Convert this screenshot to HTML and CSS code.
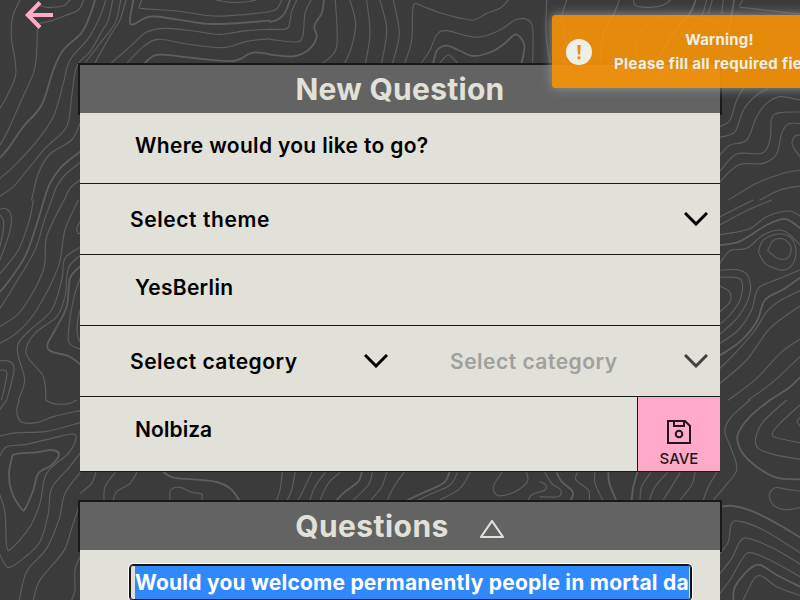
FILE: index.html
```html
<!DOCTYPE html>
<html lang="en">
<head>
<meta charset="utf-8">
<title>New Question</title>
<link rel="stylesheet" href="styles.css">
</head>
<body>
<svg class="contours" id="contours" viewBox="0 0 2400 1800" aria-hidden="true"></svg>
<a class="back"><svg width="28" height="28" viewBox="0 0 28 28"><path d="M15 1.500 2.800 14 15 26.500M3 14h25"/></svg></a>
<main class="page">
  <section class="board">
    <h1 class="board-head"><span class="t-new">New Question</span></h1>
    <div class="board-body">
      <div class="row field"><span class="t-where">Where would you like to go?</span></div>
      <div class="row"><div class="select"><span class="t-theme">Select theme</span><svg class="chevron" viewBox="0 0 24 14"><path d="M1 1l11 11L23 1"/></svg></div></div>
      <div class="row field"><span class="t-yes">YesBerlin</span></div>
      <div class="row">
        <div class="select"><span class="t-cat">Select category</span><svg class="chevron" viewBox="0 0 24 14"><path d="M1 1l11 11L23 1"/></svg></div>
        <div class="select disabled"><span class="t-cat">Select category</span><svg class="chevron" viewBox="0 0 24 14"><path d="M1 1l11 11L23 1"/></svg></div>
      </div>
      <div class="row last">
        <div class="field answer"><span class="t-no">NoIbiza</span></div>
        <div class="save"><svg width="24" height="24" viewBox="0 0 24 24"><path d="M1 1h17l5 5v17H1zM7 1v5h10V1"/><circle cx="12" cy="14" r="3.300"/></svg><span class="t-save">SAVE</span></div>
      </div>
    </div>
  </section>
  <section class="board">
    <h1 class="board-head"><span class="t-questions">Questions</span><svg class="triangle" width="26" height="20" viewBox="0 0 26 20"><path d="M13 2 2 18h22z"/></svg></h1>
    <div class="board-body list">
      <div class="edit"><span class="selected"><span class="t-would">Would you welcome permanently people in mortal da</span></span></div>
    </div>
  </section>
</main>
<aside class="toast">
  <svg class="alert" width="26" height="26" viewBox="0 0 26 26"><circle cx="13" cy="13" r="13"/><path d="M11.300 6h3.400l-.6 9.500h-2.200zM11.500 17.500h3v2.700h-3z"/></svg>
  <div class="toast-text"><div class="t-warning">Warning!</div><div class="t-please">Please fill all required fields</div></div>
</aside>
<script src="contours.js"></script>
</body>
</html>
```
FILE: styles.css
```css
* { box-sizing: border-box; }
html { overflow: hidden; background: #3b3b3b; }
body { margin: 0; width: 800px; height: 600px; overflow: hidden; position: relative; background: #3b3b3b; font-family: Inter, "Liberation Sans", sans-serif; }
span { white-space: nowrap; }
svg { display: block; flex: none; }
.contours { position: absolute; left: 0; top: 0; width: 800px; height: 600px; fill: none; stroke: #5e5e5e; stroke-width: 3.4; stroke-linecap: round; }
.contours .major { stroke-width: 5.5; }
.back { position: absolute; left: 25px; top: 1px; }
.back path { fill: none; stroke: #ffaac9; stroke-width: 4; }
.page { position: relative; width: 644px; margin: 0 auto; padding-top: 63px; display: flex; flex-direction: column; gap: 28px; }
.board-head { margin: 0; height: 52px; border: 2px solid #191919; background: #636363; color: #e1e1da; font-size: 30px; font-weight: 700; display: flex; justify-content: center; align-items: center; gap: 30px; line-height: 48px; }
.triangle { margin-top: 5px; }
.triangle path { fill: none; stroke: #e1e1da; stroke-width: 2.2; stroke-linejoin: round; }
.board-body { position: relative; width: 640px; margin: -2px auto 0; background: #e1e1da; color: #000; font-size: 21px; font-weight: 600; }
.row { height: 71px; border-bottom: 1px solid #191919; display: flex; }
.last { height: 75px; }
.field { padding: 20px 0 0 55px; line-height: 26px; }
.select { flex: 1; display: flex; align-items: center; justify-content: space-between; padding: 1px 12px 0 50px; }
.chevron { width: 24px; height: 14px; margin-bottom: 2px; }
.chevron path { fill: none; stroke: #000; stroke-width: 3; }
.disabled { color: #a0a09d; }
.disabled .chevron path { stroke: #424240; }
.answer { flex: 1; }
.save { width: 83px; border-left: 1px solid #191919; background: #ffaac9; color: #24151c; display: flex; flex-direction: column; align-items: center; padding-top: 23px; gap: 5px; font-size: 15px; font-weight: 500; line-height: 20px; }
.save path, .save circle { fill: none; stroke: #24151c; stroke-width: 2; }
.list { height: 80px; padding: 15px 0 0 50px; }
.edit { width: 561px; height: 35px; border: 1px solid #191919; border-radius: 3px; outline: 1px solid #101010; box-shadow: 0 0 0 2px #fff; padding: 0 1px 0 4px; display: flex; }
.selected { flex: 1; background: #2f89fb; color: #fff; line-height: 34px; overflow: hidden; font-weight: 700; }
.toast { position: absolute; left: 552px; top: 15px; width: 300px; height: 73px; border-radius: 3px; background: rgba(248, 148, 6, .9); box-shadow: 0 0 12px #999; color: #efefea; display: flex; align-items: center; padding: 0 15px 0 14px; gap: 10px; font-size: 15px; font-weight: 700; line-height: 24px; }
.alert circle { fill: #efefea; }
.alert path { fill: #e58d10; }
.toast-text { flex: 1; text-align: center; white-space: nowrap; }
.t-new { letter-spacing: .28px; }
.t-questions { letter-spacing: .45px; }
.t-where { letter-spacing: .32px; }
.t-theme { letter-spacing: .58px; }
.t-yes { letter-spacing: .3px; }
.t-cat { letter-spacing: .5px; }
.t-would { letter-spacing: .22px; }
.t-warning { letter-spacing: .2px; }
.t-please { letter-spacing: .32px; }
```
FILE: contours.js
```js
// Contour lines grouped by region; "*" marks a major line.
const regions = [
  [0, 0, [
    "60,0 38,50 34,110 45,180 46,230 20,290 0,325",
    "112,88 109,170 100,220 60,310 25,390 0,435",
    "*285,0 272,40 245,98 190,150 160,210 125,315 70,380 25,445 0,473",
    "317,0 300,50 265,115 210,180 190,250 160,350 105,430 40,500 0,535",
    "338,0 325,60 305,95 270,155 230,200 215,290 200,380 140,440 90,500 40,560 0,588",
    "362,0 345,70 300,130 257,186", "378,0 360,60 335,100 285,188",
    "210,0 190,17 140,22 115,14", "251,0 235,30 195,47 155,62 118,70",
    "*400,0 390,60 400,73 450,50 530,58 640,72 810,62",
    "425,0 418,20 430,26 530,33 640,48 740,43 810,35",
    "335,188 390,140 440,96 500,85 580,93 660,103 740,92 810,88",
    "382,188 430,140 475,118 560,132 670,143 740,124 810,116",
    "*435,188 460,168 490,164 590,175 700,183 750,160 780,158 810,163",
    "648,0 690,7 735,6 768,0",
    "240,370 215,420 150,462 115,520 95,600", "*240,455 185,500 150,550 132,600", "240,488 195,525 170,560 155,600", "240,540 210,565 193,600"]],
  [810, 0, [
    "35,0 20,27 0,34", "*60,0 45,38 25,58 0,66", "80,0 65,35 55,82 30,88 0,88", "123,0 105,40 98,110 75,126 0,118",
    "*162,0 155,40 133,78 140,112 115,150 70,169 0,164",
    "196,0 200,140 160,188", "240,0 257,70 245,140 225,188", "290,0 300,100 287,188", "330,0 350,90 335,188", "370,0 388,100 368,188",
    "405,188 425,120 430,18 455,18 500,35 560,52 610,60 650,40 690,25 715,0",
    "455,188 480,150 500,105 530,92 620,112 690,90 735,60 770,58 788,85 788,188",
    "*490,188 502,150 530,137 565,150 610,168 670,153 710,125 738,103 763,135 755,188", "510,188 535,165 562,188"]],
  [1620, 0, [
    "20,0 18,100 30,188", "80,0 65,60 80,140 70,188", "238,0 218,50 190,100 180,188",
    "280,0 288,17 330,22 370,15 392,0", "*467,0 450,40 400,100 350,188", "500,0 480,60 430,110", "517,0 505,40", "550,0 545,40", "*582,0 574,50 560,110",
    "608,0 600,20 630,25 780,42", "290,170 290,110 340,60 430,47 560,75",
    "540,380 570,360 590,300 610,266", "540,412 585,395 610,330 650,285 685,266",
    "540,465 570,435 620,420 650,350 680,310 720,290 780,300",
    "540,513 590,462 665,460 690,420 695,355 720,338 780,336",
    "540,545 595,495 670,490 710,462 725,400 745,372 780,371",
    "780,405 763,410 757,435 780,470", "565,600 650,550 730,520 780,510", "660,600 720,570 780,558"]],
  [0, 600, [
    "0,27 20,27 34,50 28,100 0,180", "0,45 10,60 10,90 0,140",
    "100,0 88,60 55,150 0,220", "*132,0 108,80 75,170 25,245 0,275", "155,0 130,70 105,150 50,245 0,325",
    "192,0 140,110 130,210 65,330 0,380", "235,0 195,90 175,200 110,330 55,395 0,430",
    "240,65 230,85 235,100 240,100", "240,142 195,175 185,240 155,330 90,390 55,430 55,470 74,540 55,600",
    "240,167 205,205 195,290 170,350 110,395 80,440 85,475 130,530 138,600",
    "*240,200 210,235 200,320 165,390 142,435 155,455 205,468 240,492",
    "240,235 220,300 205,400 210,432 240,447", "240,330 232,370 232,405 240,425",
    "0,482 30,485 42,512 20,600", "0,510 17,512 20,530 5,600"]],
  [1620, 600, [
    "540,50 640,0", "540,74 620,32 695,0", "540,104 625,88 680,50 745,33 780,48",
    "*540,135 600,124 680,75 735,57 780,84", "540,190 570,152 620,145 670,105 720,90 750,105 780,135",
    "655,155 670,120 715,102 755,116 768,160 752,200 720,210 675,190 655,155",
    "683,152 700,122 730,117 753,140 745,172 715,176 683,152",
    "540,211 590,209 622,225 630,280 595,350 540,402", "540,232 590,233 607,250 600,300 570,345 540,372", "540,259 568,275 570,305 540,335",
    "540,430 595,390 635,330 655,265 720,235 780,210", "*540,466 600,425 650,365 675,300 730,268 780,233",
    "540,505 590,455 645,390 680,335 715,305 780,272", "540,550 620,480 690,385 780,318", "565,600 650,535 720,460 780,417", "625,600 700,545 780,470", "*690,600 745,565 780,532"]],
  [0, 1200, [
    "20,0 0,28", "58,0 50,35 65,66 110,68 160,50 240,32", "137,0 160,11 205,11 230,0",
    "0,108 50,98 140,94 240,68", "0,168 20,140 80,133 155,115 215,102 228,115 205,160 140,220 120,310 90,380 35,445 20,438 15,340 0,285",
    "*38,165 60,160 110,157 155,150 177,163 155,195 115,220 100,270 76,325 65,327 35,275 27,220 38,165",
    "240,160 205,205 155,265 145,340 120,425 70,475 25,502 0,465",
    "240,218 195,280 178,355 140,445 80,515 58,600", "240,308 215,385 190,455 120,540 100,600", "288,216 275,250 240,280",
    "345,218 315,260 312,300", "410,218 390,250 350,275 340,300",
    "*490,216 520,233 580,238 650,246 690,265 718,300", "510,300 512,270 540,262 575,277 605,282 605,300", "240,470 225,510 225,570 215,600"]],
  [810, 1200, [
    "37,218 30,270 20,300", "75,218 65,270 52,300", "125,218 105,260 85,300", "165,218 135,260 120,300", "210,218 175,250 150,300", "*275,218 265,245 225,275 200,300", "307,218 295,255 250,300", "350,218 335,260 303,300", "402,218 375,255 352,300",
    "*538,218 520,250 455,280 413,300", "562,218 540,255 475,285 445,300", "600,218 570,265 510,300", "695,218 670,260 685,287 735,275 772,245 770,218", "775,300 785,284 810,275"]],
  [1620, 1200, [
    "0,245 18,255 15,270 0,275", "15,218 35,250 62,270 55,290 0,290", "*50,218 65,245 98,275 93,300", "112,218 108,240 145,270 148,300", "165,218 165,250 188,300", "*205,218 208,250 228,300", "*292,218 280,260 275,300", "332,218 305,260 300,300", "382,218 345,260 328,300", "420,218 395,260 370,300", "465,218 455,255 420,300", "530,218 505,260 490,300",
    "630,0 570,55 555,95 575,150 590,210 550,265 520,300",
    "*690,0 630,50 593,105 605,155 650,200 710,233 780,238", "740,0 670,65 647,115 655,145 700,163 780,178", "780,15 720,70 697,100 710,113 780,128", "780,52 771,65 780,78",
    "780,273 740,268 705,263 688,285 700,315 735,329 780,323",
    "*540,320 580,318 640,335 710,370 780,412", "540,460 565,425 575,370 605,365 680,395 780,458", "540,520 575,475 600,425 625,415 700,445 780,492",
    "540,580 570,540 605,480 630,458 690,480 780,530", "*580,600 585,560 625,510 660,495 710,525 780,560", "610,600 640,540 665,528 710,560 780,586"]]
];

function smoothPath(points) {
  let d = `M${points[0]}`;
  for (let i = 0; i < points.length - 1; i++) {
    const a = points[i - 1] || points[i], b = points[i], c = points[i + 1], e = points[i + 2] || c;
    d += `C${b[0] + (c[0] - a[0]) / 6},${b[1] + (c[1] - a[1]) / 6} ${c[0] - (e[0] - b[0]) / 6},${c[1] - (e[1] - b[1]) / 6} ${c}`;
  }
  return d;
}

const svg = document.getElementById("contours");
for (const [x, y, lines] of regions) {
  const group = document.createElementNS("http://www.w3.org/2000/svg", "g");
  group.setAttribute("transform", `translate(${x} ${y})`);
  for (const line of lines) {
    const path = document.createElementNS("http://www.w3.org/2000/svg", "path");
    if (line[0] === "*") path.setAttribute("class", "major");
    path.setAttribute("d", smoothPath(line.replace("*", "").split(" ").map(p => p.split(",").map(Number))));
    group.append(path);
  }
  svg.append(group);
}
```
